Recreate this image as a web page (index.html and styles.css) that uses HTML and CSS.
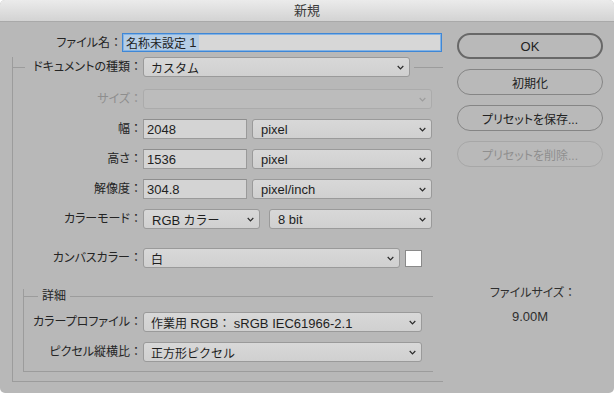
FILE: index.html
```html
<!DOCTYPE html>
<html lang="ja">
<head>
<meta charset="utf-8">
<title>新規</title>
<link rel="stylesheet" href="styles.css">
</head>
<body>
<div class="win">
  <div class="titlebar">新規</div>
  <div class="main">
    <div class="left">
      <div class="namerow">
        <span class="lbl name-lbl">ファイル名<span class="colon">：</span></span>
        <span class="field name-field"><span class="hl">名称未設定 <span class="en">1</span></span></span>
      </div>
      <div class="outer">
        <div class="ghead">
          <span class="seg seg-l"></span>
          <span class="lbl doc-lbl">ドキュメントの種類<span class="colon">：</span></span>
          <span class="select doc-sel"><span>カスタム</span><svg class="chev" width="7" height="5" viewBox="0 0 7 5"><path d="M0.7 1 L3.5 3.8 L6.3 1" fill="none" stroke="#2a2a2a" stroke-width="1.2"/></svg></span>
          <span class="seg seg-r"></span>
        </div>
        <div class="row r-first">
          <span class="lbl olbl dis">サイズ<span class="colon">：</span></span>
          <span class="select disabled w-full"><span></span><svg class="chev" width="7" height="5" viewBox="0 0 7 5"><path d="M0.7 1 L3.5 3.8 L6.3 1" fill="none" stroke="#9c9c9c" stroke-width="1.2"/></svg></span>
        </div>
        <div class="row">
          <span class="lbl olbl">幅<span class="colon">：</span></span>
          <span class="field w-num"><span class="en">2048</span></span>
          <span class="select w-unit"><span class="en">pixel</span><svg class="chev" width="7" height="5" viewBox="0 0 7 5"><path d="M0.7 1 L3.5 3.8 L6.3 1" fill="none" stroke="#2a2a2a" stroke-width="1.2"/></svg></span>
        </div>
        <div class="row">
          <span class="lbl olbl">高さ<span class="colon">：</span></span>
          <span class="field w-num"><span class="en">1536</span></span>
          <span class="select w-unit"><span class="en">pixel</span><svg class="chev" width="7" height="5" viewBox="0 0 7 5"><path d="M0.7 1 L3.5 3.8 L6.3 1" fill="none" stroke="#2a2a2a" stroke-width="1.2"/></svg></span>
        </div>
        <div class="row">
          <span class="lbl olbl">解像度<span class="colon">：</span></span>
          <span class="field w-num"><span class="en">304.8</span></span>
          <span class="select w-unit"><span class="en">pixel/inch</span><svg class="chev" width="7" height="5" viewBox="0 0 7 5"><path d="M0.7 1 L3.5 3.8 L6.3 1" fill="none" stroke="#2a2a2a" stroke-width="1.2"/></svg></span>
        </div>
        <div class="row">
          <span class="lbl olbl">カラーモード<span class="colon">：</span></span>
          <span class="select w-mode"><span><span class="en">RGB</span> カラー</span><svg class="chev" width="7" height="5" viewBox="0 0 7 5"><path d="M0.7 1 L3.5 3.8 L6.3 1" fill="none" stroke="#2a2a2a" stroke-width="1.2"/></svg></span>
          <span class="select w-bit"><span class="en">8 bit</span><svg class="chev" width="7" height="5" viewBox="0 0 7 5"><path d="M0.7 1 L3.5 3.8 L6.3 1" fill="none" stroke="#2a2a2a" stroke-width="1.2"/></svg></span>
        </div>
        <div class="row r-canvas">
          <span class="lbl olbl">カンバスカラー<span class="colon">：</span></span>
          <span class="select w-canvas"><span>白</span><svg class="chev" width="7" height="5" viewBox="0 0 7 5"><path d="M0.7 1 L3.5 3.8 L6.3 1" fill="none" stroke="#2a2a2a" stroke-width="1.2"/></svg></span>
          <span class="swatch"></span>
        </div>
        <div class="inner">
          <div class="ihead">
            <span class="seg seg-il"></span>
            <span class="legend">詳細</span>
            <span class="seg seg-r"></span>
          </div>
          <div class="row r-ifirst">
            <span class="lbl ilbl">カラープロファイル<span class="colon">：</span></span>
            <span class="select w-prof"><span>作業用 <span class="en">RGB</span>： <span class="en">sRGB IEC61966-2.1</span></span><svg class="chev" width="7" height="5" viewBox="0 0 7 5"><path d="M0.7 1 L3.5 3.8 L6.3 1" fill="none" stroke="#2a2a2a" stroke-width="1.2"/></svg></span>
          </div>
          <div class="row">
            <span class="lbl ilbl">ピクセル縦横比<span class="colon">：</span></span>
            <span class="select w-prof"><span>正方形ピクセル</span><svg class="chev" width="7" height="5" viewBox="0 0 7 5"><path d="M0.7 1 L3.5 3.8 L6.3 1" fill="none" stroke="#2a2a2a" stroke-width="1.2"/></svg></span>
          </div>
        </div>
      </div>
    </div>
    <div class="right">
      <div class="btn ok"><span class="en">OK</span></div>
      <div class="btn">初期化</div>
      <div class="btn">プリセットを保存...</div>
      <div class="btn dis">プリセットを削除...</div>
      <div class="fsize">ファイルサイズ<span class="colon">：</span></div>
      <div class="fval"><span class="en">9.00M</span></div>
    </div>
  </div>
</div>
</body>
</html>
```

FILE: styles.css
```css
body {
  margin: 0;
  background: #ffffff;
  font-family: "Liberation Sans", "Noto Sans CJK JP", sans-serif;
  font-size: 12px;
  color: #222222;
}

.en {
  font-size: 13px;
}

.colon {
  font-feature-settings: normal;
}

.win {
  width: 614px;
  height: 393px;
  background: #b8b8b8;
  border-radius: 5px;
  overflow: hidden;
}

.titlebar {
  height: 21px;
  line-height: 22px;
  text-align: center;
  background: linear-gradient(#ebebeb, #d3d3d3);
  border-bottom: 1px solid #a9a9a9;
  font-size: 13px;
  color: #3a3a3a;
}

.main {
  display: flex;
}

.left {
  width: 443px;
  flex: none;
}

.lbl {
  flex: none;
  white-space: nowrap;
  text-align: right;
  line-height: 16px;
  font-feature-settings: "palt";
  color: #242424;
}

.lbl.dis {
  color: #8e8e8e;
}

.namerow {
  display: flex;
  align-items: center;
  margin-top: 11px;
  height: 19px;
}

.name-lbl {
  width: 122px;
}

.field {
  box-sizing: border-box;
  height: 20px;
  flex: none;
  display: flex;
  align-items: center;
  padding-left: 3px;
  background: #d4d4d4;
  border: 1px solid #9a9a9a;
  border-top-color: #8e8e8e;
}

.name-field {
  width: 320px;
  height: 19px;
  padding-left: 1px;
  border: 1px solid #3f87d6;
  box-shadow: inset 0 0 0 1px #84b3e4;
  background: #d7d7d7;
}

.hl {
  display: flex;
  align-items: center;
  height: 15px;
  padding: 0 2px;
  background: #b4cde6;
  white-space: pre;
}

.outer {
  margin: 15px 0 0 12px;
  width: 430px;
  border-left: 1px solid #9c9c9c;
  border-bottom: 1px solid #9c9c9c;
}

.ghead {
  display: flex;
  align-items: center;
  height: 20px;
  margin-top: -10px;
}

.seg {
  height: 1px;
  background: #9c9c9c;
}

.seg-l {
  width: 12px;
  flex: none;
}

.seg-r {
  flex: 1;
}

.doc-lbl {
  width: 117px;
  margin-right: 1px;
}

.select {
  box-sizing: border-box;
  height: 20px;
  flex: none;
  display: flex;
  align-items: center;
  justify-content: space-between;
  padding: 0 5px 0 7px;
  background: linear-gradient(#d8d8d8, #d0d0d0);
  border: 1px solid #9a9a9a;
  border-radius: 3px;
  white-space: pre;
  color: #1e1e1e;
}

.select.disabled {
  background: #bcbcbc;
  border-color: #ababab;
}

.chev {
  flex: none;
}

.doc-sel {
  width: 267px;
  margin-right: 4px;
}

.row {
  display: flex;
  align-items: center;
  height: 20px;
  margin-top: 10px;
}

.r-first {
  margin-top: 12px;
}

.olbl {
  width: 129px;
  margin-right: 1px;
}

.w-full {
  width: 289px;
}

.w-num {
  width: 104px;
  margin-right: 5px;
}

.w-unit {
  width: 180px;
  padding-left: 8px;
}

.w-mode {
  width: 117px;
  margin-right: 9px;
  padding-left: 8px;
}

.w-bit {
  width: 163px;
  padding-left: 8px;
}

.r-canvas {
  margin-top: 19px;
}

.w-canvas {
  width: 257px;
  margin-right: 5px;
}

.swatch {
  box-sizing: border-box;
  width: 17px;
  height: 17px;
  background: #ffffff;
  border: 1px solid #8a8a8a;
}

.inner {
  margin: 28px 0 9px 10px;
  width: 409px;
  padding-bottom: 9px;
  border-left: 1px solid #9c9c9c;
  border-bottom: 1px solid #9c9c9c;
}

.ihead {
  display: flex;
  align-items: center;
  height: 14px;
  margin-top: -7px;
}

.seg-il {
  width: 14px;
  flex: none;
}

.legend {
  padding: 0 4px 0 4px;
  line-height: 14px;
  color: #242424;
}

.r-ifirst {
  margin-top: 9px;
}

.ilbl {
  width: 118px;
  margin-right: 1px;
}

.w-prof {
  width: 279px;
}

.right {
  width: 146px;
  margin-left: 14px;
  padding-top: 11px;
  display: flex;
  flex-direction: column;
}

.btn {
  box-sizing: border-box;
  height: 26px;
  margin-bottom: 10px;
  border: 1px solid #858585;
  border-radius: 13px;
  display: flex;
  align-items: center;
  justify-content: center;
  background: #b9b9b9;
  color: #222222;
  font-feature-settings: "palt";
}

.btn.ok {
  border: 2px solid #686868;
}

.btn.dis {
  border-color: #a7a7a7;
  color: #8f8f8f;
}

.fsize {
  margin-top: 108px;
  padding-left: 6px;
  line-height: 16px;
  text-align: center;
  color: #2e2e2e;
  font-feature-settings: "palt";
}

.fval {
  margin-top: 8px;
  line-height: 16px;
  text-align: center;
  color: #2e2e2e;
}
```
